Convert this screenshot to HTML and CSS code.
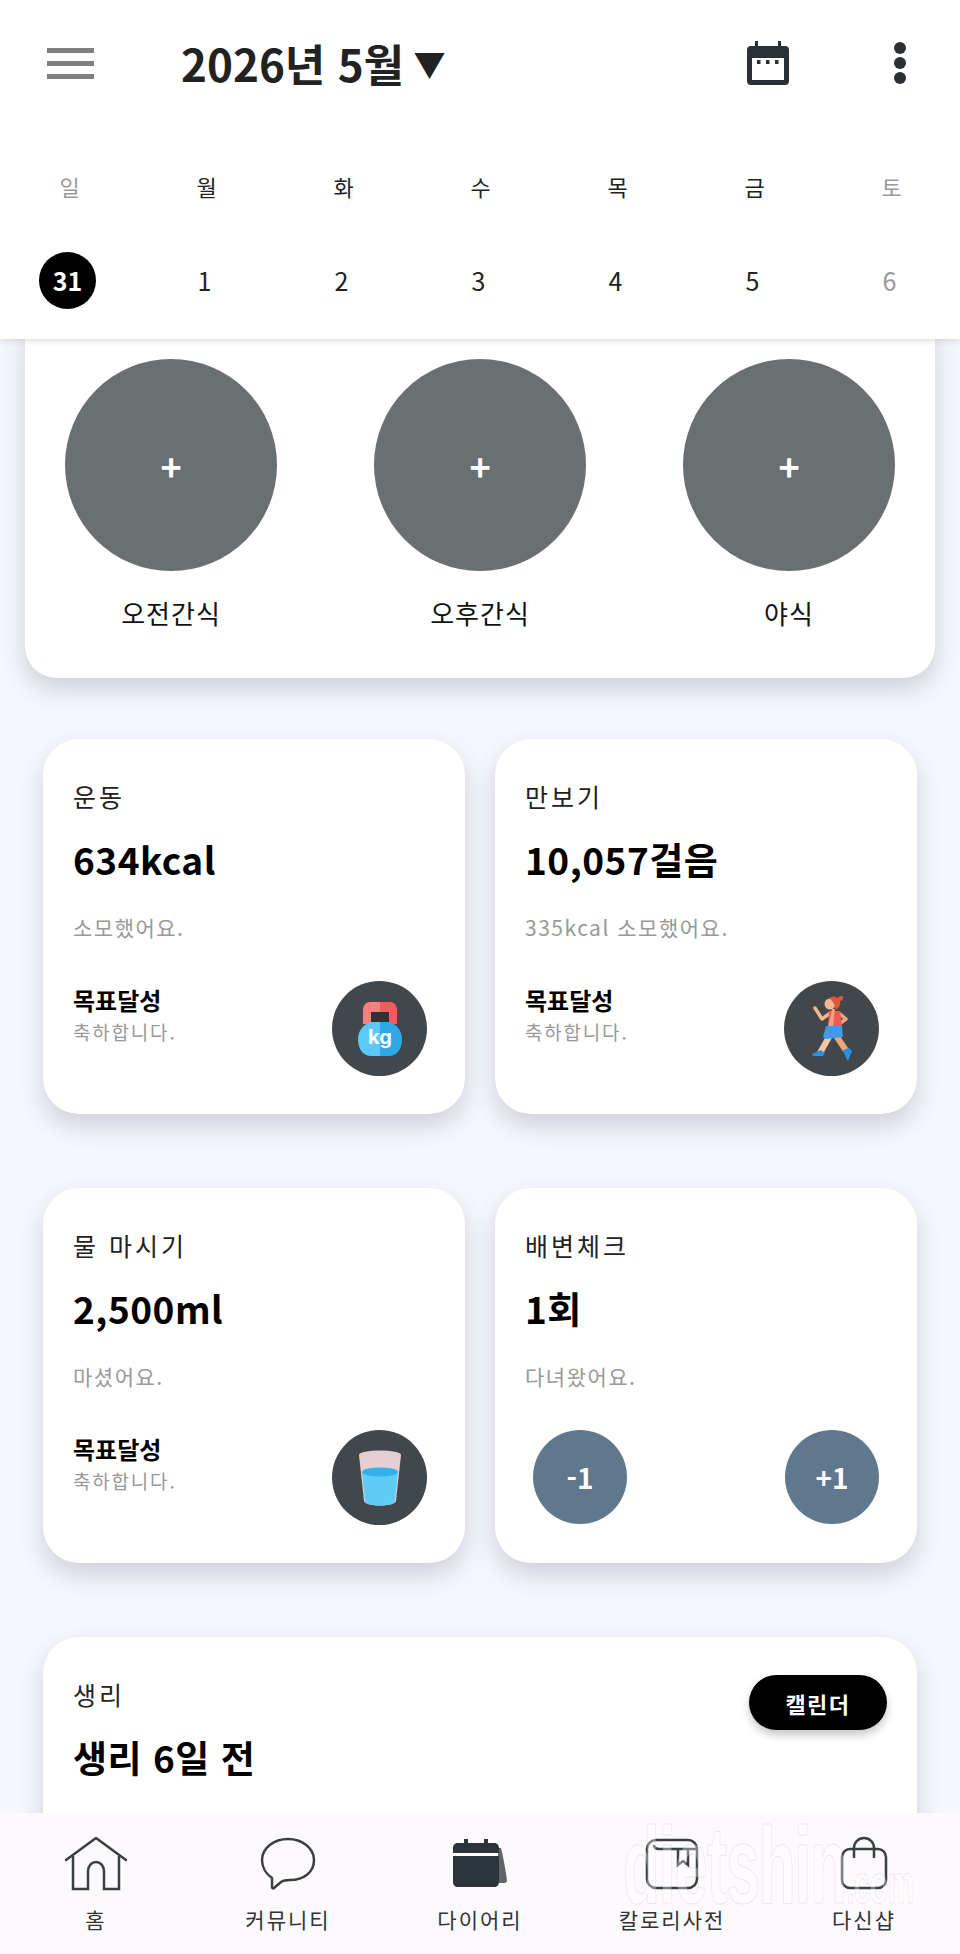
FILE: index.html
```html
<!DOCTYPE html>
<html lang="ko">
<head>
	<meta charset="UTF-8">
	<title>다이어리</title>
	<link rel="stylesheet" href="styles.css">
</head>
<body>
	<header class="app-header">
		<div class="top-bar">
			<div class="menu-btn"><span></span><span></span><span></span></div>
			<h1 class="month-title">2026년 5월 <span class="caret">▼</span></h1>
			<svg class="cal-btn" width="42" height="46" viewBox="0 0 42 46">
				<path d="M8 1h3v5h20V1h3v5h4a4 4 0 0 1 4 4v31a4 4 0 0 1-4 4H4a4 4 0 0 1-4-4V10a4 4 0 0 1 4-4h4z" fill="#2b3035"/>
				<rect x="5" y="18" width="32" height="22" fill="#fff"/>
				<rect x="10" y="20" width="3.5" height="4" fill="#2b3035"/>
				<rect x="19" y="20" width="3.5" height="4" fill="#2b3035"/>
				<rect x="28" y="20" width="3.5" height="4" fill="#2b3035"/>
			</svg>
			<div class="more-btn"><span></span><span></span><span></span></div>
		</div>
		<div class="week-row">
			<span class="muted">일</span><span>월</span><span>화</span><span>수</span><span>목</span><span>금</span><span class="muted">토</span>
		</div>
		<div class="date-row">
			<span class="today">31</span><span>1</span><span>2</span><span>3</span><span>4</span><span>5</span><span class="muted">6</span>
		</div>
	</header>

	<main class="content">
		<section class="snack-card">
			<div class="snack">
				<div class="snack-add">+</div>
				<p>오전간식</p>
			</div>
			<div class="snack">
				<div class="snack-add">+</div>
				<p>오후간식</p>
			</div>
			<div class="snack">
				<div class="snack-add">+</div>
				<p>야식</p>
			</div>
		</section>

		<section class="stat-grid">
			<article class="stat-card">
				<h2>운동</h2>
				<div class="stat-value">634kcal</div>
				<p class="stat-desc">소모했어요.</p>
				<div class="stat-foot">
					<div class="goal"><strong>목표달성</strong><span>축하합니다.</span></div>
					<div class="stat-icon">
						<svg width="44" height="54" viewBox="0 0 44 54">
							<path d="M5 22V7a7 7 0 0 1 7-7h10v10h-9v12z" fill="#fa7f7f"/>
							<path d="M39 22V7a7 7 0 0 0-7-7H22v10h9v12z" fill="#f45b5b"/>
							<rect x="13" y="10" width="18" height="10" fill="#2f3336"/>
							<path d="M22 20H12C5 23 0 29 0 37c0 10 5 17 13 17h9z" fill="#5cc8f8"/>
							<path d="M22 20h10c7 3 12 9 12 17 0 10-5 17-13 17h-9z" fill="#2fa9e6"/>
							<text x="22" y="42" text-anchor="middle" class="kg-text">kg</text>
						</svg>
					</div>
				</div>
			</article>

			<article class="stat-card">
				<h2>만보기</h2>
				<div class="stat-value">10,057걸음</div>
				<p class="stat-desc">335kcal 소모했어요.</p>
				<div class="stat-foot">
					<div class="goal"><strong>목표달성</strong><span>축하합니다.</span></div>
					<div class="stat-icon">
						<svg width="40" height="65" viewBox="0 0 40 65">
							<path d="M17 18 10 23 3 12" fill="none" stroke="#f4b78f" stroke-width="3.5" stroke-linecap="round" stroke-linejoin="round"/>
							<path d="M28 18l6 5-7 5" fill="none" stroke="#eea77c" stroke-width="3.5" stroke-linecap="round" stroke-linejoin="round"/>
							<path d="M17 15h11l2 16H16z" fill="#ef5a50"/>
							<path d="M20 13h3l-2 18h-5z" fill="#f6a07c"/>
							<path d="M17 41 8 57" stroke="#f8c7a2" stroke-width="6" stroke-linecap="round"/>
							<path d="M25 41l8 12" stroke="#eea77c" stroke-width="6" stroke-linecap="round"/>
							<path d="M14 30h16l1 11-17 2-3-2z" fill="#3f9be8"/>
							<path d="M0 58l9-4 4 3-2 3H1z" fill="#2d8fe0"/>
							<path d="M31 54l6-2 3 3-4 10-2-3z" fill="#2d8fe0"/>
							<circle cx="18" cy="8" r="5.5" fill="#f6b58d"/>
							<path d="M17 2c3-2 6-2 9 0 1-2 4-3 5-1s-1 4-3 4c1 4-1 7-4 9-1-4-2-8-7-12z" fill="#d9593a"/>
						</svg>
					</div>
				</div>
			</article>

			<article class="stat-card">
				<h2>물 마시기</h2>
				<div class="stat-value">2,500ml</div>
				<p class="stat-desc">마셨어요.</p>
				<div class="stat-foot">
					<div class="goal"><strong>목표달성</strong><span>축하합니다.</span></div>
					<div class="stat-icon">
						<svg width="44" height="56" viewBox="0 0 44 56">
							<path d="M1 5c0-6 42-6 42 0l-5 46c-1 6-31 6-32 0z" fill="#e5cfd2"/>
							<path d="M4 22c10 4 26 4 36 0l-3 29c-1 6-29 6-30 0z" fill="#5fcbf7"/>
							<ellipse cx="22" cy="22" rx="18" ry="4.5" fill="#35b1ea"/>
						</svg>
					</div>
				</div>
			</article>

			<article class="stat-card">
				<h2>배변체크</h2>
				<div class="stat-value">1회</div>
				<p class="stat-desc">다녀왔어요.</p>
				<div class="stat-foot counter">
					<button class="count-btn">-1</button>
					<button class="count-btn">+1</button>
				</div>
			</article>

			<article class="stat-card period-card">
				<h2>생리</h2>
				<div class="stat-value">생리 6일 전</div>
				<button class="pill-btn">캘린더</button>
			</article>
		</section>
	</main>

	<nav class="bottom-nav">
		<a class="nav-item">
			<svg width="64" height="56" viewBox="0 0 64 56" fill="none" stroke="#3a3f44" stroke-width="2.5">
				<path d="M2 24 32 2l30 22" stroke-linejoin="round" stroke-linecap="round"/>
				<path d="M9 20v33h15V35a8 9 0 0 1 16 0v18h15V20"/>
			</svg>
			<span>홈</span>
		</a>
		<a class="nav-item">
			<svg width="56" height="56" viewBox="0 0 56 56" fill="none" stroke="#3a3f44" stroke-width="2.5">
				<path d="M28 3c14 0 26 9 26 21S44 44 30 44c-4 0-6 0-9 2l-7 6c-1 1-2 0-2-1v-9C6 38 2 31 2 24 2 12 14 3 28 3z" stroke-linejoin="round"/>
			</svg>
			<span>커뮤니티</span>
		</a>
		<a class="nav-item">
			<svg width="56" height="56" viewBox="0 0 56 56">
				<path d="M46 12h3c2 7 5 25 6 32 0 2-1 3-3 3h-6z" fill="#5f6468"/>
				<path d="M6 7h6V3h4v4h16V3h4v4h6c3 0 5 2 5 5v5H1v-5c0-3 2-5 5-5z" fill="#2c353b"/>
				<path d="M1 20h46v26c0 3-2 5-5 5H6c-3 0-5-2-5-5z" fill="#2c353b"/>
			</svg>
			<span>다이어리</span>
		</a>
		<a class="nav-item">
			<svg width="54" height="56" viewBox="0 0 54 56" fill="none" stroke="#3a3f44" stroke-width="2.5">
				<rect x="2" y="4" width="50" height="48" rx="9"/>
				<path d="M9 9c0 3 2 4 5 4h38"/>
				<path d="M33 13v16l5-4 5 4V13"/>
			</svg>
			<span>칼로리사전</span>
		</a>
		<a class="nav-item">
			<svg width="48" height="56" viewBox="0 0 48 56" fill="none" stroke="#3a3f44" stroke-width="2.5">
				<rect x="2" y="13" width="44" height="39" rx="8"/>
				<path d="M14 22V12a10 10 0 0 1 20 0v10"/>
			</svg>
			<span>다신샵</span>
		</a>
		<div class="watermark">dietshin<small>.com</small></div>
	</nav>
</body>
</html>
```

FILE: styles.css
```css
/* Base styles */
:root {
	--color-page: #f6f6fd;
	--color-ink: #222;
	--color-muted: #999;
	--color-slate: #5f788d;
	--color-disc: #41474b;
	--card-shadow: 0 12px 24px rgba(60, 60, 90, 0.2);
}

* {
	box-sizing: border-box;
}

html, body {
	margin: 0;
	height: 100%;
}

body {
	width: 960px;
	height: 1954px;
	display: flex;
	flex-direction: column;
	overflow: hidden;
	background: var(--color-page);
	color: var(--color-ink);
	font-family: "Noto Sans CJK KR", "Noto Sans", sans-serif;
}

h1, h2, p {
	margin: 0;
	font-weight: normal;
}

/* Header */
.app-header {
	position: relative;
	z-index: 2;
	flex: none;
	height: 339px;
	background: #fff;
	box-shadow: 0 1px 8px rgba(60, 60, 90, 0.2);
}

.top-bar {
	display: flex;
	align-items: center;
	height: 126px;
	padding: 0 54px 0 47px;
}

.menu-btn {
	display: flex;
	flex-direction: column;
	gap: 8px;
	width: 47px;
}

.menu-btn span {
	display: block;
	height: 5px;
	background: #808080;
}

.month-title {
	flex: 1;
	margin-left: 87px;
	font-size: 44px;
	font-weight: bold;
	line-height: 1;
	white-space: nowrap;
}

.caret {
	margin-left: -3px;
	font-size: 32px;
	vertical-align: 5px;
}

.cal-btn {
	margin-right: 105px;
}

.more-btn {
	display: flex;
	flex-direction: column;
	gap: 3px;
}

.more-btn span {
	width: 12px;
	height: 12px;
	border-radius: 50%;
	background: #2b3035;
}

.week-row,
.date-row {
	display: grid;
	grid-template-columns: repeat(7, 137px);
	text-align: center;
}

.week-row {
	padding: 39px 0 0 1px;
	font-size: 22px;
	line-height: 42px;
}

.date-row {
	align-items: center;
	margin-top: 45px;
	margin-left: -1px;
	font-size: 25px;
	line-height: 57px;
}

.muted {
	color: #999;
}

.today {
	justify-self: center;
	width: 57px;
	height: 57px;
	border-radius: 50%;
	background: #000;
	color: #fff;
	font-weight: bold;
}

/* Scrolling content */
.content {
	flex: 1;
	min-height: 0;
	overflow: hidden;
	padding: 0 25px;
}

.snack-card {
	display: flex;
	justify-content: space-between;
	height: 369px;
	margin-top: -30px;
	padding: 50px 40px 0;
	border-radius: 32px;
	background: #fff;
	box-shadow: var(--card-shadow);
}

.snack {
	width: 212px;
	text-align: center;
}

.snack p {
	margin-top: 24px;
	font-size: 26px;
	line-height: 36px;
	letter-spacing: 1px;
	color: #111;
}

.snack-add {
	width: 212px;
	height: 212px;
	border-radius: 50%;
	background: #6a6f72;
	color: #fff;
	font-size: 36px;
	font-weight: bold;
	line-height: 212px;
}

.stat-grid {
	display: grid;
	grid-template-columns: 422px 422px;
	grid-auto-rows: 375px;
	gap: 74px 30px;
	margin: 61px 18px 0;
}

.stat-card {
	position: relative;
	display: flex;
	flex-direction: column;
	padding: 39px 30px 0 31px;
	border-radius: 36px;
	background: #fff;
	box-shadow: var(--card-shadow);
}

.stat-card h2 {
	margin-left: -1px;
	font-size: 25px;
	line-height: 36px;
	letter-spacing: 3px;
}

.stat-value {
	margin-top: 18px;
	margin-left: -1px;
	font-size: 37px;
	font-weight: bold;
	line-height: 54px;
	letter-spacing: 0.5px;
	color: #000;
}

.stat-desc {
	margin-top: 26px;
	margin-left: -1px;
	font-size: 21px;
	line-height: 30px;
	letter-spacing: 1.5px;
	color: var(--color-muted);
}

.stat-foot {
	display: flex;
	justify-content: space-between;
	margin-top: 39px;
}

.goal {
	display: flex;
	flex-direction: column;
	margin-left: -1px;
}

.goal strong {
	font-size: 24px;
	line-height: 38px;
	color: #000;
}

.goal span {
	font-size: 19px;
	line-height: 26px;
	letter-spacing: 1.8px;
	color: var(--color-muted);
}

.stat-icon {
	display: flex;
	align-items: center;
	justify-content: center;
	width: 95px;
	height: 95px;
	margin-right: 8px;
	border-radius: 50%;
	background: var(--color-disc);
}

.kg-text {
	font-family: "Inter", sans-serif;
	font-size: 20px;
	font-weight: bold;
	fill: #fff;
}

.counter {
	padding: 0 8px 0 7px;
}

.count-btn {
	width: 94px;
	height: 94px;
	padding: 0;
	border: 0;
	border-radius: 50%;
	background: var(--color-slate);
	color: #fff;
	font-family: inherit;
	font-size: 28px;
	font-weight: bold;
}

.period-card {
	grid-column: 1 / -1;
}

.pill-btn {
	position: absolute;
	top: 38px;
	right: 30px;
	width: 138px;
	height: 55px;
	border: 0;
	border-radius: 28px;
	background: #000;
	box-shadow: 0 5px 8px rgba(0, 0, 0, 0.22);
	color: #fff;
	font-family: inherit;
	font-size: 22px;
	font-weight: bold;
	letter-spacing: 1.5px;
}

/* Bottom navigation */
.bottom-nav {
	position: relative;
	z-index: 2;
	flex: none;
	display: grid;
	grid-template-columns: repeat(5, 192px);
	height: 141px;
	padding-top: 23px;
	background: #fdfafd;
}

.nav-item {
	display: flex;
	flex-direction: column;
	align-items: center;
	font-size: 21px;
	line-height: 30px;
	letter-spacing: 2px;
	color: #333;
}

.nav-item span {
	margin-top: 12px;
}

.watermark {
	position: absolute;
	top: 14px;
	left: 623px;
	font-family: "Liberation Sans", sans-serif;
	font-size: 110px;
	font-weight: bold;
	line-height: 76px;
	letter-spacing: -2px;
	color: rgba(255, 255, 255, 0.35);
	-webkit-text-stroke: 1px rgba(130, 130, 130, 0.16);
	transform: scaleX(0.55);
	transform-origin: left top;
	white-space: nowrap;
}

.watermark small {
	font-size: 56px;
}
```
